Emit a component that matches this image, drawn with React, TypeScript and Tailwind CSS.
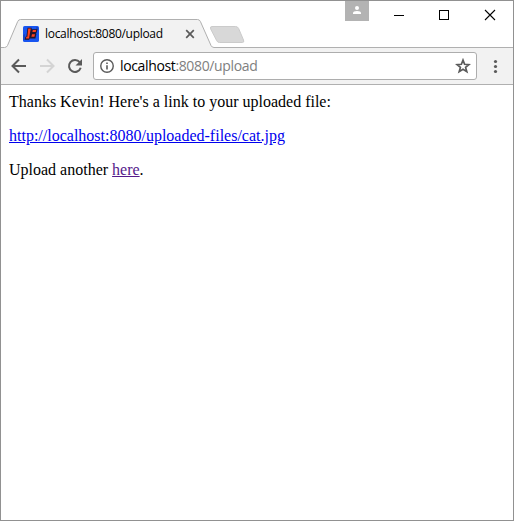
import React from "react";

function Favicon() {
  return (
    <svg width="16" height="16" viewBox="0 0 16 16" className="shrink-0">
      <rect width="16" height="16" rx="1.6" fill="#1855f0" />
      <path d="M0 9l2-1v6H0zM13 1h2v3l-2 1z" fill="#1746c8" />
      <path d="M4.6 1.7h4.2l-.3 1.6h5.9l-.7 3.2-.7.8.4.8-1 4.5H6.6l-.4 1.2H1.8l.6-3 1-.4z" fill="#25152b" />
      <path d="M5.2 2.5h2.6L6 12.4H2.9l.5-1.6h1z" fill="#ff431f" />
      <path d="M9.8 4h3.4l-.5 2H9.4zM9 8.2h3l-.6 2.6H8.4z" fill="#ff431f" />
    </svg>
  );
}

function TabStrip() {
  return (
    <div className="relative h-[47px] shrink-0">
      <svg width="512" height="47" viewBox="1 1 512 47" className="absolute left-0 top-0">
        <path d="M1 47.5H4.5Q6.6 47.5 7.5 45.5L17.7 21.5Q18.5 19.5 20.5 19.5H197.5Q199.5 19.5 200.4 21.5L211 45.5Q212 47.5 214 47.5H513V48H1z" fill="#f2f2f2" />
        <path d="M1 47.5H4.5Q6.6 47.5 7.5 45.5L17.7 21.5Q18.5 19.5 20.5 19.5H197.5Q199.5 19.5 200.4 21.5L211 45.5Q212 47.5 214 47.5H513" fill="none" stroke="#b0b0b0" />
        <path d="M212 26.5H235.5Q237.7 26.5 238.6 28.4L243.5 40Q244.6 42.5 242.3 42.5H219.5Q217.5 42.5 216.7 40.7L210.7 29Q209.6 26.5 212 26.5z" fill="#d8d8d8" stroke="#cbcbcb" />
      </svg>
      <div className="relative flex items-start">
        <div className="mt-[25px] ml-[22px] flex h-4 w-[174px] items-center">
          <Favicon />
          <span className="ml-[6px] w-[140px] whitespace-nowrap font-['Open_Sans','Noto_Sans',sans-serif] text-[12px] leading-4 tracking-[-0.31px] text-black">
            localhost:8080/upload
          </span>
          <svg width="10" height="10" viewBox="0 0 10 10" className="shrink-0">
            <path d="M1.2 1.2l7.6 7.6M8.8 1.2L1.2 8.8" stroke="#5a5a5a" strokeWidth="1.7" />
          </svg>
        </div>
        <div className="ml-[148px] h-5 w-6 shrink-0 bg-[#b3b3b3]">
          <svg width="24" height="20" viewBox="0 0 24 20">
            <circle cx="12" cy="7" r="2" fill="#fff" />
            <path d="M8 13v-1q0-2 4-2t4 2v1z" fill="#fff" />
          </svg>
        </div>
        <svg width="144" height="29" viewBox="369 1 144 29" shapeRendering="crispEdges" className="shrink-0">
          <path d="M394 15.5h10" stroke="#000" />
          <rect x="439.5" y="10.5" width="9" height="9" fill="none" stroke="#000" />
          <path d="M485 10l10 10M495 10l-10 10" stroke="#000" strokeWidth="1.1" shapeRendering="auto" />
        </svg>
      </div>
    </div>
  );
}

function Toolbar() {
  return (
    <div className="flex h-[37px] shrink-0 items-center border-b border-[#b0b0b0] bg-[#f2f2f2]">
      <svg width="92" height="36" viewBox="1 48 92 36" fill="none" className="shrink-0">
        <path d="M26 66H13M19 59.5L12.5 66L19 72.5" stroke="#5a5a5a" strokeWidth="2" />
        <path d="M40 66H53M47 59.5L53.5 66L47 72.5" stroke="#d4d4d4" strokeWidth="2" />
        <path d="M79.7 62.2A6 6 0 1 0 80.7 67.8" stroke="#5a5a5a" strokeWidth="2" />
        <path d="M82 59v6.4h-6.5z" fill="#5a5a5a" />
      </svg>
      <div className="flex h-7 w-[384px] shrink-0 items-center rounded-[3px] border border-[#adadad] bg-white">
        <svg width="14" height="14" viewBox="0 0 14 14" className="ml-[6px] shrink-0">
          <circle cx="7" cy="7" r="6.25" fill="none" stroke="#5a5a5a" strokeWidth="1.4" />
          <path d="M6.2 3.5h1.6v1.6H6.2zM6.2 6.2h1.6v4.3H6.2z" fill="#5a5a5a" />
        </svg>
        <span className="ml-[6px] flex-1 whitespace-nowrap font-['Open_Sans','Noto_Sans',sans-serif] text-[14px] leading-5 tracking-[-0.36px] text-black">
          localhost<span className="text-[#808080]">:8080/upload</span>
        </span>
        <svg width="16" height="16" viewBox="0 0 16 16" className="mr-[5px] shrink-0">
          <path d="M8 2.1L9.6 6.3 14 6.6 10.6 9.4 11.8 13.7 8 11.3 4.2 13.7 5.4 9.4 2 6.6 6.4 6.3z" fill="none" stroke="#5a5a5a" strokeWidth="1.7" />
        </svg>
      </div>
      <svg width="36" height="36" viewBox="477 48 36 36" fill="#5a5a5a" className="shrink-0">
        <circle cx="495.5" cy="61.5" r="1.6" />
        <circle cx="495.5" cy="66.5" r="1.6" />
        <circle cx="495.5" cy="71.5" r="1.6" />
      </svg>
    </div>
  );
}

export default function App() {
  return (
    <div className="flex h-[521px] w-[514px] flex-col overflow-hidden border border-[#919191] bg-white">
      <TabStrip />
      <Toolbar />
      <main className="flex flex-col gap-4 px-2 pt-2 font-['Liberation_Serif',serif] text-[16px] leading-[18px] text-black">
        <p>Thanks Kevin! Here's a link to your uploaded file:</p>
        <p><a href="#" className="text-[#0000ee] underline">http://localhost:8080/uploaded-files/cat.jpg</a></p>
        <p>Upload another <a href="#" className="text-[#551a8b] underline">here</a>.</p>
      </main>
    </div>
  );
}
